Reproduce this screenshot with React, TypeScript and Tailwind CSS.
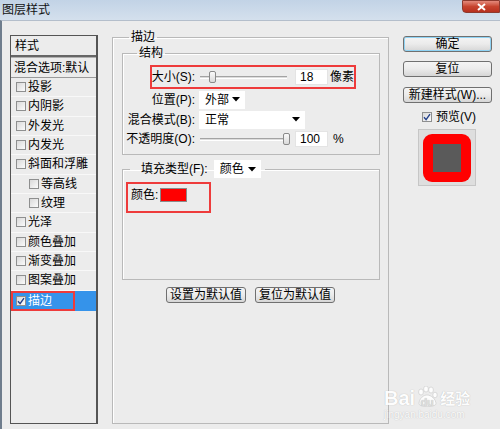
import React from "react"

const leftItems: { label: string; sub?: boolean }[] = [
  { label: "投影" },
  { label: "内阴影" },
  { label: "外发光" },
  { label: "内发光" },
  { label: "斜面和浮雕" },
  { label: "等高线", sub: true },
  { label: "纹理", sub: true },
  { label: "光泽" },
  { label: "颜色叠加" },
  { label: "渐变叠加" },
  { label: "图案叠加" },
]

function Check({ checked }: { checked?: boolean }) {
  return (
    <span className="flex h-[10px] w-[10px] shrink-0 items-center justify-center border border-[#8e8f8f] bg-gradient-to-br from-[#d9d9d9] to-[#fbfbfb]">
      {checked && (
        <svg width="8" height="8" viewBox="0 0 8 8">
          <path d="M1 4.2 L3.1 6.6 L7 1.2" stroke="#23408a" strokeWidth="1.4" fill="none" />
        </svg>
      )}
    </span>
  )
}

function Btn({ children, className = "" }: { children: React.ReactNode; className?: string }) {
  return (
    <div
      className={`flex h-[16px] items-center justify-center rounded-[3px] border border-[#707070] bg-gradient-to-b from-[#f4f4f4] via-[#ebebeb] to-[#d6d6d6] text-[12px] leading-none text-black ${className}`}
    >
      {children}
    </div>
  )
}

function Arrow() {
  return (
    <svg width="8" height="5" viewBox="0 0 8 5" className="shrink-0">
      <path d="M0 0 H8 L4 4.5 Z" fill="#000" />
    </svg>
  )
}

function Select({ value, className = "" }: { value: string; className?: string }) {
  return (
    <div className={`flex h-[18px] shrink-0 items-center justify-between bg-white pl-[6px] pr-[5px] ${className}`}>
      <span>{value}</span>
      <Arrow />
    </div>
  )
}

function Slider({ width, thumb }: { width: number; thumb: number }) {
  return (
    <div className="relative flex h-[14px] shrink-0 items-center" style={{ width }}>
      <div className="h-[3px] w-full border-t border-[#a3a3a3] border-b border-b-white bg-[#dcdcdc]" />
      <div
        className="absolute top-[1px] h-[12px] w-[7px] rounded-[2px] border border-[#8a8a8a] bg-gradient-to-b from-[#fafafa] to-[#dadada]"
        style={{ left: thumb }}
      />
    </div>
  )
}

function Input({ value }: { value: string }) {
  return (
    <div className="flex h-[16px] w-[33px] shrink-0 items-center border border-[#e4e4e4] bg-white pl-[4px] text-[12px] leading-none">
      {value}
    </div>
  )
}

export default function App() {
  return (
    <div className="flex h-[429px] w-[500px] flex-col overflow-hidden whitespace-nowrap bg-[#ececec] font-['Liberation_Sans','Noto_Sans_CJK_SC',sans-serif] text-[12px] leading-[14px] text-black">
      {/* title bar */}
      <div className="flex h-[20px] shrink-0 items-start justify-between bg-gradient-to-b from-[#c2d3e6] to-[#d4e0ed]">
        <span className="pl-[2px] pt-[3px] text-[12px] leading-[14px] text-[#111]">图层样式</span>
        <div className="flex h-[13px] w-[38px] items-center justify-center rounded-bl-[4px] border border-[#8d3a2f] bg-gradient-to-b from-[#e3897b] via-[#c7442f] to-[#b7301f]">
          <svg width="9" height="8" viewBox="0 0 9 8">
            <path d="M1 1 L8 7 M8 1 L1 7" stroke="#fff" strokeWidth="2" />
          </svg>
        </div>
      </div>

      <div className="relative flex flex-1 items-start border-l-2 border-t border-l-[#6f7d8d] border-t-[#b4becb]">
        {/* left list */}
        <div className="ml-[8px] mt-[14px] flex h-[389px] w-[88px] flex-col border border-r-2 border-[#555]">
          <div className="flex h-[19px] items-center pl-[4px]">样式</div>
          <div className="h-[2px] bg-[#666]" />
          <div className="h-[1px] bg-[#b0b0b0]" />
          <div className="flex h-[20px] items-center border-b border-[#9a9a9a] pl-[3px]">混合选项:默认</div>
          {leftItems.map((it) => (
            <div
              key={it.label}
              className={`flex h-[19.33px] items-center border-b border-[#f8f8f8] ${it.sub ? "pl-[18px]" : "pl-[5px]"}`}
            >
              <Check />
              <span className="ml-[2px]">{it.label}</span>
            </div>
          ))}
          <div className="flex h-[20px] bg-[#3593ea]">
            <div className="flex w-[64px] items-center border-2 border-[#ee3b3b] pl-[3px] text-white">
              <Check checked />
              <span className="ml-[2px]">描边</span>
            </div>
          </div>
        </div>

        {/* main group */}
        <fieldset className="ml-[14px] mt-[9px] h-[394px] w-[277px] border border-[#b9b9b9] shadow-[inset_1px_1px_0_#fff]">
          <legend className="ml-[16px] px-[2px] leading-[14px]">描边</legend>

          <fieldset className="ml-[9px] mt-[2px] h-[109px] w-[258px] border border-[#b9b9b9] shadow-[inset_1px_1px_0_#fff]">
            <legend className="ml-[14px] px-[2px] leading-[14px]">结构</legend>

            <div className="ml-[27px] mt-[5px] flex h-[24px] w-[206px] items-center overflow-visible border-2 border-[#ee3b3b]">
              <span className="flex w-[43px] shrink-0 justify-end">大小(S):</span>
              <div className="ml-[5px] shrink-0">
                <Slider width={87} thumb={9} />
              </div>
              <div className="ml-[8px] shrink-0">
                <Input value="18" />
              </div>
              <span className="ml-[2px] shrink-0">像素</span>
            </div>

            <div className="mt-[1px] flex h-[19px] items-center">
              <span className="flex w-[72px] shrink-0 justify-end">位置(P):</span>
              <Select value="外部" className="ml-[4px] w-[46px]" />
            </div>
            <div className="mt-[1px] flex h-[19px] items-center">
              <span className="flex w-[72px] shrink-0 justify-end">混合模式(B):</span>
              <Select value="正常" className="ml-[4px] w-[106px]" />
            </div>
            <div className="flex h-[20px] items-center">
              <span className="flex w-[72px] shrink-0 justify-end">不透明度(O):</span>
              <div className="ml-[5px] shrink-0">
                <Slider width={89} thumb={83} />
              </div>
              <div className="ml-[6px] shrink-0">
                <Input value="100" />
              </div>
              <span className="ml-[5px]">%</span>
            </div>
          </fieldset>

          <fieldset className="ml-[9px] mt-[5px] h-[120px] w-[258px] border border-[#b9b9b9] shadow-[inset_1px_1px_0_#fff]">
            <legend className="ml-[7px] flex items-center pl-[11px] pr-[4px]">
              <span>填充类型(F):</span>
              <Select value="颜色" className="ml-[6px] w-[47px]" />
            </legend>
            <div className="ml-[3px] mt-[4px] flex h-[31px] w-[85px] items-start border-2 border-[#ee3b3b] pl-[3px] pt-[4px]">
              <span className="leading-[14px]">颜色:</span>
              <span className="ml-[2px] h-[14px] w-[27px] border border-[#8a8a8a] bg-[#ff0000]" />
            </div>
          </fieldset>

          <div className="mt-[7px] flex justify-center gap-[9px]">
            <Btn className="w-[80px]">设置为默认值</Btn>
            <Btn className="w-[80px]">复位为默认值</Btn>
          </div>
        </fieldset>

        {/* right buttons */}
        <div className="ml-[14px] mt-[15px] flex w-[89px] flex-col">
          <Btn className="h-[15px] border-[#3c7fb1] shadow-[inset_0_0_0_1px_#8fd3f4]">确定</Btn>
          <Btn className="mt-[9px] h-[15px]">复位</Btn>
          <Btn className="mt-[10px] h-[15px]">新建样式(W)...</Btn>
          <div className="ml-[19px] mt-[8px] flex h-[12px] items-center">
            <Check checked />
            <span className="ml-[4px]">预览(V)</span>
          </div>
          <div className="ml-[15px] mt-[6px] flex h-[57px] w-[58px] items-center justify-center border border-[#c6c6c6] bg-[#dedede]">
            <div className="flex h-[48px] w-[48px] items-center justify-center rounded-[9px] bg-[#ff0000]">
              <div className="h-[28px] w-[28px] bg-[#5a5a5a]" />
            </div>
          </div>
        </div>

        {/* watermark */}
        <div className="absolute left-[382px] top-[367px] flex flex-col items-start text-white opacity-90 [text-shadow:0_0_1px_#aaa]">
          <div className="flex items-end">
            <span className="text-[20px] font-bold leading-[20px]">Bai</span>
            <span className="relative ml-[1px] flex h-[18px] w-[22px] items-end justify-center">
              <svg width="22" height="22" viewBox="0 0 22 22" className="absolute bottom-[0px] left-0">
                <g fill="#fff" stroke="#bbb" strokeWidth="0.5">
                  <ellipse cx="5" cy="6" rx="2.4" ry="3" />
                  <ellipse cx="10" cy="3" rx="2.4" ry="3" />
                  <ellipse cx="15" cy="4" rx="2.4" ry="3" />
                  <ellipse cx="19" cy="9" rx="2.2" ry="2.8" />
                  <path d="M3 18 C3 12 8 9 11 9 C15 9 20 13 20 18 C20 21 3 21 3 18 Z" />
                </g>
              </svg>
              <span className="relative text-[11px] font-bold leading-[12px] text-[#ddd]">du</span>
            </span>
            <span className="ml-[2px] text-[15px] font-bold leading-[18px]">经验</span>
          </div>
          <span className="mt-[1px] text-[10px] leading-[12px]">jingyan.baidu.com</span>
        </div>
      </div>
    </div>
  )
}
